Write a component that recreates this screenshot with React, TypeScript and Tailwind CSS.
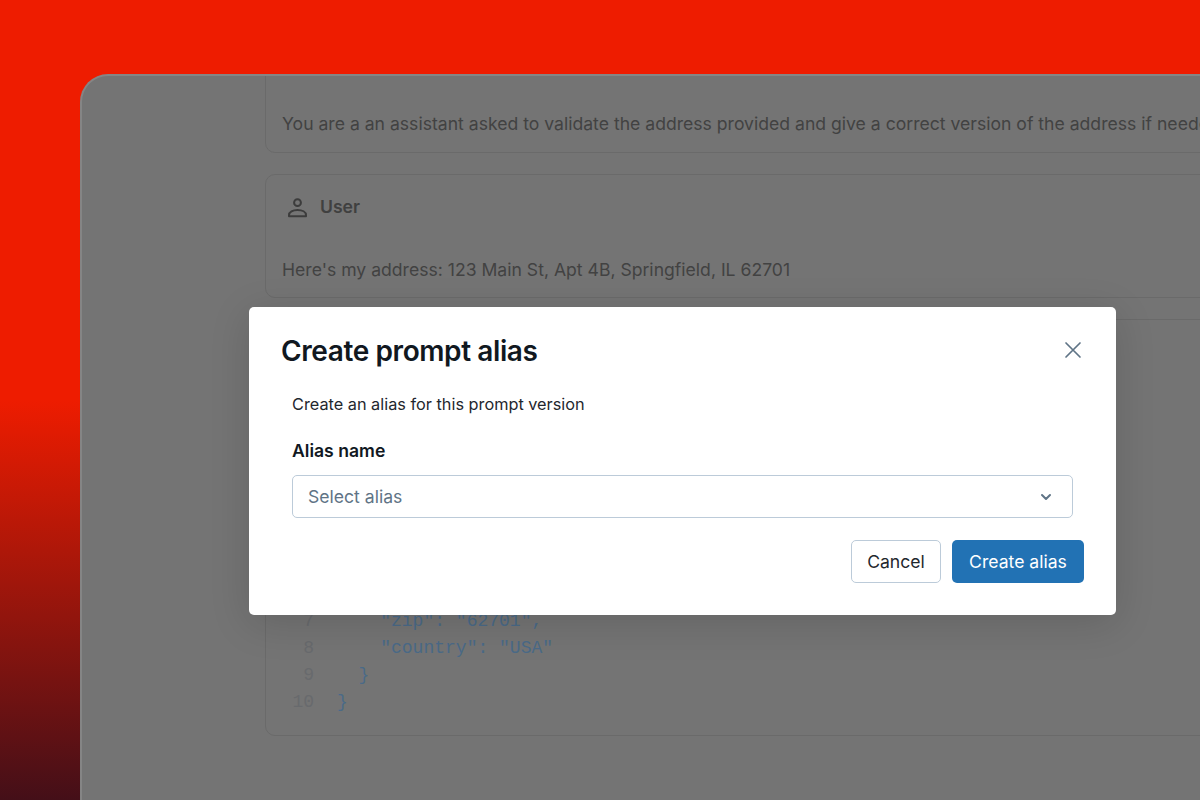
const lines: [number, string, string][] = [
  [1, "", "{"],
  [2, "  ", '"address": {'],
  [3, "    ", '"street": "123 Main St",'],
  [4, "    ", '"apt": "4B",'],
  [5, "    ", '"city": "Springfield",'],
  [6, "    ", '"state": "IL",'],
  [7, "    ", '"zip": "62701",'],
  [8, "    ", '"country": "USA"'],
  [9, "  ", "}"],
  [10, "", "}"],
];

function Card({ children, className }: { children: React.ReactNode; className?: string }) {
  return <div className={"w-[1200px] shrink-0 rounded-[10px] border border-[#6a6a6a] " + (className ?? "")}>{children}</div>;
}

export default function App() {
  return (
    <div
      className="h-[800px] w-[1200px] overflow-hidden pl-[80px] pt-[74px] relative bg-[linear-gradient(180deg,#ee1c00_0%,#ee1c00_50%,#440f18_100%)]"
      style={{ fontFamily: "Inter, 'Liberation Sans', sans-serif" }}
    >
      <div className="h-[726px] w-[1400px] overflow-hidden rounded-tl-[28px] border-l-2 border-t-2 border-[#858585] bg-[#747474] flex flex-col justify-end gap-[21px] pl-[183px] pb-[64px]">
        <Card className="h-[120px] flex flex-col justify-end shrink-0 pb-[16px] pl-[16px]">
          <p className="text-[17.6px] leading-[24px] text-[#424242] whitespace-nowrap">
            You are a an assistant asked to validate the address provided and give a correct version of the address if needed.
          </p>
        </Card>
        <Card className="h-[124px] shrink-0">
          <div className="flex items-center gap-[12px] pl-[20px] h-[65px]">
            <svg width="22" height="22" viewBox="0 0 22 22" fill="none" stroke="#3c3c3c" strokeWidth="2">
              <circle cx="11.5" cy="5.7" r="3.4" />
              <path d="M3 19.2v-1c0-3.2 3.8-5.2 8.5-5.2s8.5 2 8.5 5.2v1z" strokeLinejoin="round" />
            </svg>
            <span className="text-[17.6px] font-semibold text-[#404040]">User</span>
          </div>
          <p className="pl-[16px] pt-[18px] text-[17.6px] leading-[24px] text-[#424242] whitespace-nowrap">
            Here's my address: 123 Main St, Apt 4B, Springfield, IL 62701
          </p>
        </Card>
        <Card className="h-[417px] shrink-0 flex flex-col justify-end pb-[19px] pl-[15px]">
          <div className="text-[18px] leading-[27px] font-['Liberation_Mono',monospace]">
            {lines.map(([n, indent, text]) => (
              <div key={n} className="flex whitespace-pre">
                <span className="w-[33px] text-right text-[#686a6d]">{n}</span>
                <span className="ml-[23px] text-[#4a6a88]">{indent}{text}</span>
              </div>
            ))}
          </div>
        </Card>
      </div>

      <div className="absolute left-[249px] top-[307px] h-[308px] w-[867px] rounded-[5px] bg-white shadow-[0_8px_40px_rgba(0,0,0,0.14)] pt-[24px] pb-[32px]">
        <div className="flex items-center justify-between pl-[32px] pr-[32px] h-[40px]">
          <h2 className="text-[28px] font-semibold tracking-[-0.4px] text-[#11181f]">Create prompt alias</h2>
          <svg width="22" height="22" viewBox="0 0 22 22" fill="none" stroke="#5f7486" strokeWidth="1.7" strokeLinecap="round" className="-translate-y-px">
            <path d="M4 4l14 14M18 4L4 18" />
          </svg>
        </div>
        <div className="pl-[43px] pr-[43px]">
          <p className="mt-[21px] text-[16.3px] leading-[24px] text-[#1f272e]">Create an alias for this prompt version</p>
          <p className="mt-[23px] text-[17.6px] leading-[24px] font-semibold text-[#11181f]">Alias name</p>
          <div className="mt-[12px] h-[43px] rounded-[5px] border border-[#bccbd9] flex items-center justify-between pl-[15px] pr-[19px]">
            <span className="pt-[1px] text-[17.6px] text-[#5f7486]">Select alias</span>
            <svg width="14" height="14" viewBox="0 0 14 14" fill="none" stroke="#5f7486" strokeWidth="2" strokeLinecap="round" strokeLinejoin="round">
              <path d="M3 5l4 4 4-4" />
            </svg>
          </div>
        </div>
        <div className="mt-[22px] flex justify-end gap-[11px] pr-[32px]">
          <button className="h-[43px] w-[90px] rounded-[5px] border border-[#bccbd9] bg-white pt-[1px] text-[17.6px] text-[#1f272e]">Cancel</button>
          <button className="h-[43px] w-[132px] rounded-[5px] bg-[#2272b4] pt-[1px] text-[17.6px] text-white">Create alias</button>
        </div>
      </div>
    </div>
  );
}
